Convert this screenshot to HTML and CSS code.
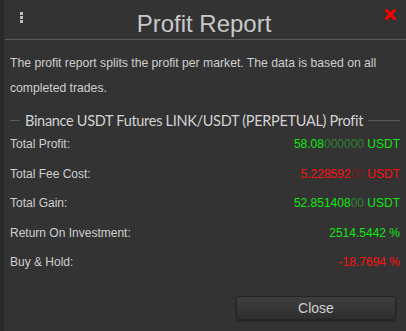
FILE: index.html
```html
<html>

<head>
    <meta charset="utf-8">
    <title>Profit Report</title>
    <link rel="stylesheet" href="styles.css">
</head>

<body>
    <div class="dialog">
        <div class="header">
            <span class="menu-icon"><i></i><i></i><i></i></span>
            <h1>Profit Report</h1>
            <svg class="close-icon" width="11" height="11" viewBox="0 0 11 11">
                <path d="M1.5 1.5 L9.5 9.5 M9.5 1.5 L1.5 9.5" stroke="#ff0000" stroke-width="3" stroke-linecap="square" />
            </svg>
        </div>
        <p class="intro">The profit report splits the profit per market. The data is based on all completed trades.</p>
        <div class="market">
            <div class="market-title">
                <span class="rule short"></span>
                <span class="title-text">Binance USDT Futures LINK/USDT (PERPETUAL) Profit</span>
                <span class="rule"></span>
            </div>
            <div class="row">
                <span class="label">Total Profit:</span>
                <span class="value green">58.08<span class="dim">000000</span> USDT</span>
            </div>
            <div class="row">
                <span class="label">Total Fee Cost:</span>
                <span class="value red">5.228592<span class="dim">00</span> USDT</span>
            </div>
            <div class="row">
                <span class="label">Total Gain:</span>
                <span class="value green">52.851408<span class="dim">00</span> USDT</span>
            </div>
            <div class="row">
                <span class="label">Return On Investment:</span>
                <span class="value green">2514.5442 %</span>
            </div>
            <div class="row">
                <span class="label">Buy &amp; Hold:</span>
                <span class="value red">-18.7694 %</span>
            </div>
        </div>
        <div class="footer">
            <button class="close-button">Close</button>
        </div>
    </div>
</body>

</html>
```

FILE: styles.css
```css
* {
    margin: 0;
    padding: 0;
    box-sizing: border-box;
}

body {
    background: #333333;
    font-family: "Liberation Sans", Arial, sans-serif;
    color: #cfcfcf;
    width: 406px;
    height: 331px;
    overflow: hidden;
}

.dialog {
    border-left: 4px solid #2a2a2a;
    height: 100%;
    padding-left: 1px;
}

.header {
    display: flex;
    align-items: center;
    justify-content: space-between;
    height: 40px;
    border-bottom: 1px solid #5a5a5a;
    padding: 0 10px 0 15px;
}

.menu-icon {
    display: flex;
    flex-direction: column;
    gap: 1px;
    margin-top: -4px;
}

.menu-icon i {
    display: block;
    width: 3px;
    height: 3px;
    background: #bdbdbd;
}

.header h1 {
    font-weight: normal;
    font-size: 24px;
    color: #c8c8c8;
    margin-top: 9px;
}

.close-icon {
    margin-top: -11px;
}

.intro {
    font-size: 12.2px;
    line-height: 25px;
    padding: 11px 5px 0 5px;
}

.market {
    margin: 9px 6px 0 5px;
}

.market-title {
    display: flex;
    align-items: center;
    gap: 5px;
    height: 20px;
}

.rule {
    flex: 1;
    height: 1px;
    background: #5a5a5a;
}

.rule.short {
    flex: none;
    width: 10px;
}

.title-text {
    font-family: Lato, "Liberation Sans", sans-serif;
    font-size: 14.5px;
    letter-spacing: -0.3px;
    color: #d2d2d2;
}

.row {
    display: flex;
    justify-content: space-between;
    font-size: 12px;
    line-height: 29.5px;
}

.green {
    color: #10e810;
}

.red {
    color: #ff1010;
}

.green .dim {
    color: #338033;
}

.red .dim {
    color: #7a1c1c;
}

.footer {
    display: flex;
    justify-content: flex-end;
    padding: 18px 10px 0 0;
}

.close-button {
    width: 160px;
    height: 24px;
    background: linear-gradient(#3e3e3e, #2e2e2e);
    border: 1px solid #242424;
    border-radius: 3px;
    color: #d0d0d0;
    font-family: "Liberation Sans", Arial, sans-serif;
    font-size: 14px;
    box-shadow: 0 1px 2px rgba(0, 0, 0, 0.4);
}
```
